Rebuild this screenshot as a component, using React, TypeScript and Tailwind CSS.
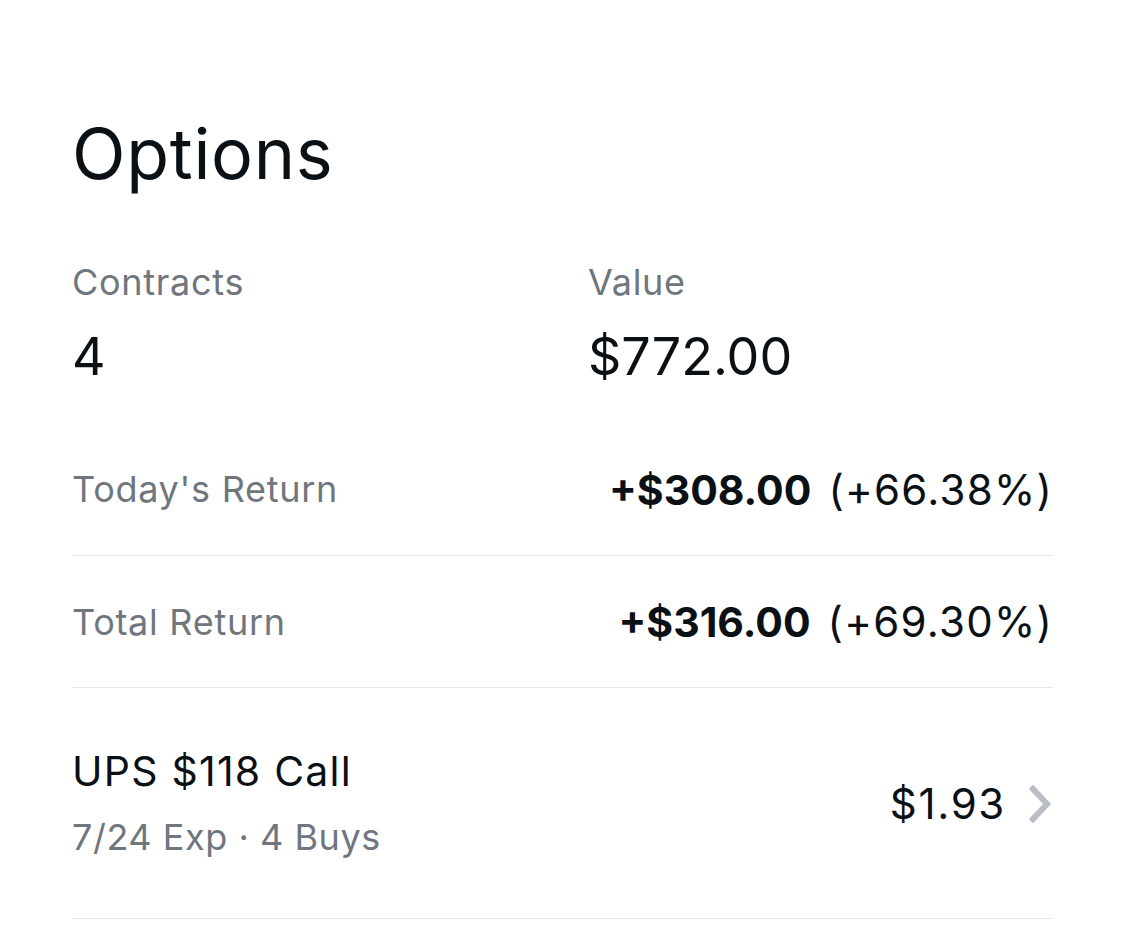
export default function App() {
  const font = { fontFamily: 'Inter, "Noto Sans", sans-serif' };
  return (
    <div className="w-[1125px] h-[945px] bg-white px-[72px] text-[#0b1015]" style={font}>
      <h1 className="pt-[112px] text-[70px] leading-[84px] font-normal tracking-[0.01em]">Options</h1>
      <div className="mt-[64px] flex">
        <div className="w-[516px] flex flex-col">
          <div className="text-[36px] leading-[44px] text-[#6f767e] tracking-[0.02em]">Contracts</div>
          <div className="mt-[22px] text-[52px] leading-[62px]">4</div>
        </div>
        <div className="flex flex-col">
          <div className="text-[36px] leading-[44px] text-[#6f767e] tracking-[0.02em]">Value</div>
          <div className="mt-[22px] text-[52px] leading-[62px]">$772.00</div>
        </div>
      </div>
      <div className="mt-[36px] h-[132px] flex items-center justify-between border-b border-[#e6e8ea]">
        <span className="text-[36px] text-[#6f767e] tracking-[0.02em] pb-[2px]">Today's Return</span>
        <span className="flex items-baseline gap-[17px]">
          <span className="font-bold text-[41px]">+$308.00</span>
          <span className="text-[42px] tracking-[0.03em]">(+66.38%)</span>
        </span>
      </div>
      <div className="h-[132px] flex items-center justify-between border-b border-[#e6e8ea]">
        <span className="text-[36px] text-[#6f767e] tracking-[0.02em]">Total Return</span>
        <span className="flex items-baseline gap-[17px]">
          <span className="font-bold text-[41px]">+$316.00</span>
          <span className="text-[42px] tracking-[0.03em]">(+69.30%)</span>
        </span>
      </div>
      <div className="h-[231px] flex items-center justify-between border-b border-[#e6e8ea]">
        <div className="flex flex-col">
          <span className="text-[41px] leading-[48px] tracking-[0.03em]">UPS $118 Call</span>
          <span className="mt-[20px] text-[36px] leading-[44px] text-[#6f767e] tracking-[0.015em]">7/24 Exp · 4 Buys</span>
        </div>
        <div className="flex items-center gap-[22px]">
          <span className="text-[42px] tracking-[0.04em]">$1.93</span>
          <svg width="25" height="40" viewBox="0 0 25 40" fill="none" className="mt-[2px]">
            <path d="M5 5 L19 20 L5 35" stroke="#b8bec4" strokeWidth="6" strokeLinecap="square" strokeLinejoin="miter" />
          </svg>
        </div>
      </div>
    </div>
  );
}
